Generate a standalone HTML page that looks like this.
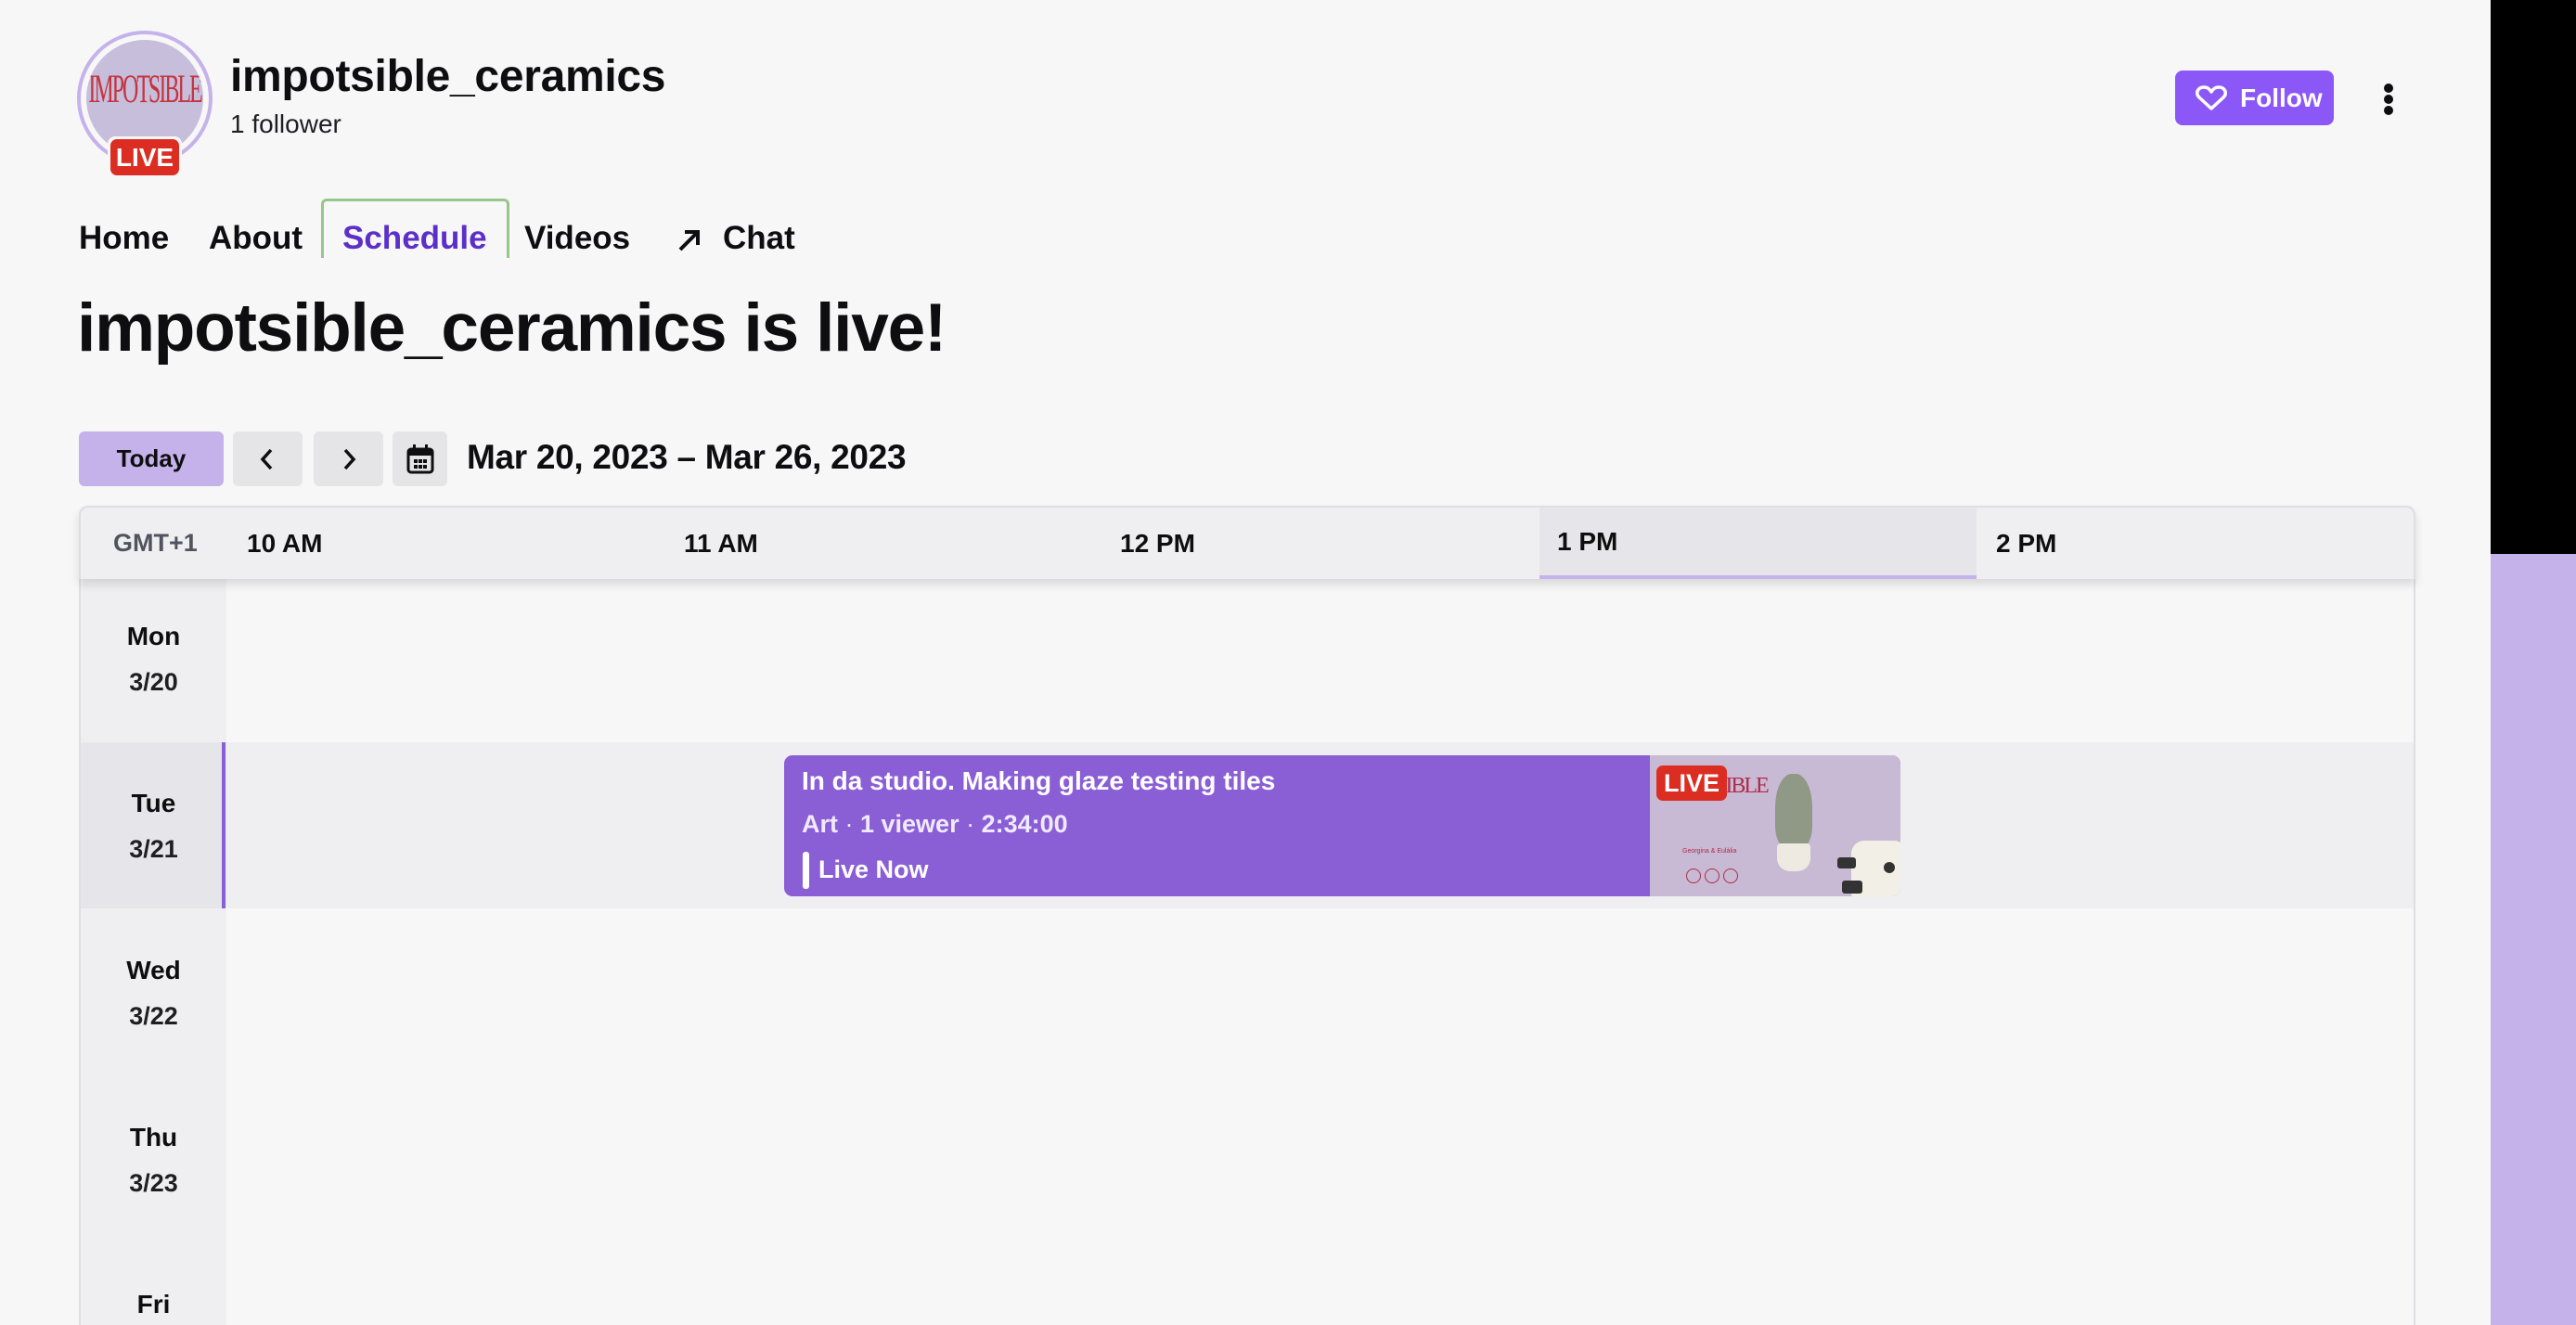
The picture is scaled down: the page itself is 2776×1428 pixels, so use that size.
<!DOCTYPE html>
<html><head><meta charset="utf-8"><style>
*{margin:0;padding:0;box-sizing:border-box}
html,body{width:2776px;height:1428px;overflow:hidden}
body{background:#f7f7f8;font-family:"Liberation Sans",sans-serif;color:#0e0e10;position:relative}
.a{position:absolute;white-space:nowrap}
.b{font-weight:700}
</style></head><body>
<div class="a" style="left:2684px;top:0;width:92px;height:597px;background:#000"></div>
<div class="a" style="left:2684px;top:597px;width:92px;height:831px;background:#c5b2ea"></div>

<div class="a" style="left:83px;top:33px;width:146px;height:146px;border-radius:50%;border:4px solid #c5b2ea;background:#f7f7f8"></div>
<div class="a" style="left:93px;top:43px;width:126px;height:126px;border-radius:50%;background:#c6bedb;overflow:hidden">
<div class="a" style="left:0;top:42px;width:126px;text-align:center;font-family:'Liberation Serif',serif;font-size:24px;color:#c4343f;letter-spacing:-2px;transform:scaleY(1.8)">IMPOTSIBLE</div></div>
<div class="a" style="left:116px;top:147px;width:80px;height:45px;border-radius:8px;background:#f7f7f8"></div>
<div class="a b" style="left:119px;top:150px;width:74px;height:39px;border-radius:7px;background:#dc2d22;color:#fff;font-size:28px;line-height:39px;text-align:center">LIVE</div>

<div class="a b" style="left:248px;top:55px;font-size:48px;letter-spacing:-0.3px">impotsible_ceramics</div>
<div class="a" style="left:248px;top:118px;font-size:28px;color:#1f1f23">1 follower</div>

<div class="a b" style="left:2344px;top:76px;width:171px;height:59px;border-radius:8px;background:#8c57f7;color:#fff;font-size:28px;line-height:59px;padding-left:70px">Follow</div>
<svg class="a" style="left:2366px;top:92px" width="34" height="28" viewBox="0 0 34 28"><path d="M17 25 L4 13 C-1 8 3 2 9 2 C13 2 15 4 17 7 C19 4 21 2 25 2 C31 2 35 8 30 13 Z" fill="none" stroke="#fff" stroke-width="3.5" stroke-linejoin="round"/></svg>
<div class="a" style="left:2569px;top:90px;width:10px;height:10px;border-radius:50%;background:#0e0e10"></div>
<div class="a" style="left:2569px;top:102px;width:10px;height:10px;border-radius:50%;background:#0e0e10"></div>
<div class="a" style="left:2569px;top:114px;width:10px;height:10px;border-radius:50%;background:#0e0e10"></div>

<div class="a b" style="left:85px;top:237px;font-size:35px">Home</div>
<div class="a b" style="left:225px;top:237px;font-size:35px">About</div>
<div class="a" style="left:346px;top:214px;width:203px;height:64px;border:3px solid #98c68a;border-bottom:none;border-radius:6px 6px 0 0"></div>
<div class="a b" style="left:369px;top:237px;font-size:35px;color:#5c2fc9">Schedule</div>
<div class="a b" style="left:565px;top:237px;font-size:35px">Videos</div>
<svg class="a" style="left:728px;top:244px" width="30" height="30" viewBox="0 0 30 30"><path d="M5 25 L24 6 M10 6 H24 V20" fill="none" stroke="#0e0e10" stroke-width="4"/></svg>
<div class="a b" style="left:779px;top:237px;font-size:35px">Chat</div>

<div class="a b" style="left:83px;top:312px;font-size:73px;letter-spacing:-1.2px">impotsible_ceramics is live!</div>

<div class="a b" style="left:85px;top:465px;width:156px;height:59px;border-radius:6px;background:#c5b2ea;font-size:26px;line-height:59px;text-align:center">Today</div>
<div class="a" style="left:251px;top:465px;width:75px;height:59px;border-radius:6px;background:#e5e5e8"></div>
<svg class="a" style="left:276px;top:482px" width="24" height="26" viewBox="0 0 24 26"><path d="M16 3 L7 13 L16 23" fill="none" stroke="#0e0e10" stroke-width="3.5"/></svg>
<div class="a" style="left:338px;top:465px;width:75px;height:59px;border-radius:6px;background:#e5e5e8"></div>
<svg class="a" style="left:364px;top:482px" width="24" height="26" viewBox="0 0 24 26"><path d="M8 3 L17 13 L8 23" fill="none" stroke="#0e0e10" stroke-width="3.5"/></svg>
<div class="a" style="left:423px;top:465px;width:59px;height:59px;border-radius:6px;background:#e5e5e8"></div>
<svg class="a" style="left:437px;top:478px" width="32" height="34" viewBox="0 0 32 34"><rect x="3" y="6" width="26" height="25" rx="3" fill="none" stroke="#0e0e10" stroke-width="3"/><rect x="3" y="6" width="26" height="7" fill="#0e0e10"/><rect x="8" y="1" width="3" height="7" fill="#0e0e10"/><rect x="21" y="1" width="3" height="7" fill="#0e0e10"/><g fill="#0e0e10"><rect x="9" y="17" width="4" height="4"/><rect x="14" y="17" width="4" height="4"/><rect x="19" y="17" width="4" height="4"/><rect x="9" y="23" width="4" height="4"/><rect x="14" y="23" width="4" height="4"/><rect x="19" y="23" width="4" height="4"/></g></svg>
<div class="a b" style="left:503px;top:472px;font-size:37px;letter-spacing:-0.3px">Mar 20, 2023 – Mar 26, 2023</div>

<div class="a" style="left:85px;top:545px;width:2518px;height:883px;border:2px solid #dedee3;border-bottom:none;border-radius:10px 10px 0 0;background:#f7f7f8"></div>
<div class="a" style="left:87px;top:624px;width:157px;height:804px;background:#efeff1"></div>
<div class="a" style="left:87px;top:800px;width:2514px;height:179px;background:#efeff1"></div>
<div class="a" style="left:87px;top:800px;width:157px;height:179px;background:#e6e6ea"></div>
<div class="a" style="left:239px;top:800px;width:4px;height:179px;background:#8a5fd6"></div>
<div class="a" style="left:85px;top:545px;width:2518px;height:79px;border:2px solid #dedee3;border-bottom:none;border-radius:10px 10px 0 0;background:#efeff1;box-shadow:0 6px 10px rgba(0,0,0,0.12)"></div>
<div class="a" style="left:1659px;top:547px;width:471px;height:77px;background:#e6e6ea;border-bottom:4px solid #c5b2ea"></div>
<div class="a b" style="left:122px;top:570px;font-size:27px;color:#53535f">GMT+1</div>
<div class="a b" style="left:266px;top:570px;font-size:28px">10 AM</div>
<div class="a b" style="left:737px;top:570px;font-size:28px">11 AM</div>
<div class="a b" style="left:1207px;top:570px;font-size:28px">12 PM</div>
<div class="a b" style="left:1678px;top:568px;font-size:28px">1 PM</div>
<div class="a b" style="left:2151px;top:570px;font-size:28px">2 PM</div>

<div class="a b" style="left:87px;top:670px;width:157px;text-align:center;font-size:28px">Mon</div>
<div class="a b" style="left:87px;top:720px;width:157px;text-align:center;font-size:27px;color:#1f1f23">3/20</div>
<div class="a b" style="left:87px;top:850px;width:157px;text-align:center;font-size:28px">Tue</div>
<div class="a b" style="left:87px;top:900px;width:157px;text-align:center;font-size:27px;color:#1f1f23">3/21</div>
<div class="a b" style="left:87px;top:1030px;width:157px;text-align:center;font-size:28px">Wed</div>
<div class="a b" style="left:87px;top:1080px;width:157px;text-align:center;font-size:27px;color:#1f1f23">3/22</div>
<div class="a b" style="left:87px;top:1210px;width:157px;text-align:center;font-size:28px">Thu</div>
<div class="a b" style="left:87px;top:1260px;width:157px;text-align:center;font-size:27px;color:#1f1f23">3/23</div>
<div class="a b" style="left:87px;top:1390px;width:157px;text-align:center;font-size:28px">Fri</div>

<div class="a" style="left:845px;top:814px;width:1203px;height:152px;border-radius:9px;background:#8a5fd6;overflow:hidden">
 <div class="a" style="left:933px;top:0;width:270px;height:152px;background:#c8bad4"></div>
 <div class="a" style="left:975px;top:20px;font-family:'Liberation Serif',serif;font-size:24px;color:#b02a4a;letter-spacing:-2px">OTSIBLE</div>
 <div class="a" style="left:968px;top:100px;font-size:7px;color:#b02a4a">Georgina &amp; Eulàlia</div>
 <div class="a" style="left:972px;top:122px;width:16px;height:16px;border:1.5px solid #b02a4a;border-radius:50%"></div>
 <div class="a" style="left:992px;top:122px;width:16px;height:16px;border:1.5px solid #b02a4a;border-radius:50%"></div>
 <div class="a" style="left:1012px;top:122px;width:16px;height:16px;border:1.5px solid #b02a4a;border-radius:50%"></div>
 <div class="a" style="left:1068px;top:20px;width:40px;height:80px;border-radius:45% 45% 30% 30%;background:#7e8c6c;opacity:.75"></div>
 <div class="a" style="left:1070px;top:95px;width:36px;height:30px;border-radius:4px 4px 14px 14px;background:#eeeae2"></div>
 <div class="a" style="left:1150px;top:92px;width:60px;height:70px;border-radius:14px;background:#f2efe6"></div>
 <div class="a" style="left:1135px;top:110px;width:20px;height:12px;background:#333;border-radius:3px"></div>
 <div class="a" style="left:1140px;top:135px;width:22px;height:14px;background:#333;border-radius:3px"></div>
 <div class="a" style="left:1185px;top:115px;width:12px;height:12px;background:#333;border-radius:50%"></div>
</div>
<div class="a b" style="left:1785px;top:825px;width:76px;height:38px;border-radius:7px;background:#dc2d22;color:#fff;font-size:27px;line-height:38px;text-align:center">LIVE</div>
<div class="a b" style="left:864px;top:826px;font-size:28px;color:#fff">In da studio. Making glaze testing tiles</div>
<div class="a b" style="left:864px;top:873px;font-size:27px;color:#f0eaff">Art <span style="font-weight:400">·</span> 1 viewer <span style="font-weight:400">·</span> 2:34:00</div>
<div class="a" style="left:865px;top:918px;width:7px;height:40px;border-radius:3px;background:#fff"></div>
<div class="a b" style="left:882px;top:922px;font-size:27px;color:#fff">Live Now</div>
</body></html>
